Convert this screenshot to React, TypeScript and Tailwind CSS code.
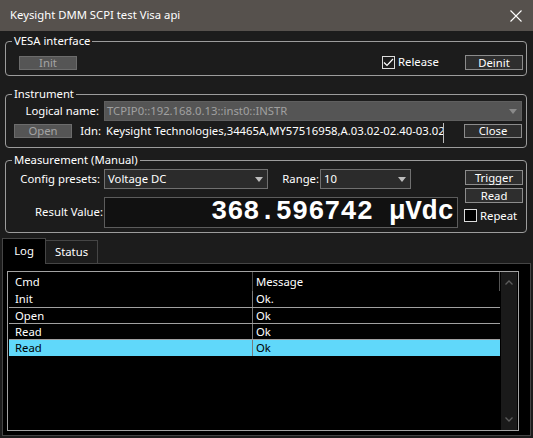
import type { ReactNode } from "react";

interface BtnProps {
  label: string;
  disabled?: boolean;
  className?: string;
}

function Btn({ label, disabled, className = "" }: BtnProps) {
  return (
    <button
      disabled={disabled}
      className={`w-[58px] flex items-center justify-center border leading-none shrink-0 ${
        disabled
          ? "bg-[#555555] border-[#6c6c6c] text-[#a3a3a3]"
          : "bg-[#2e2e2e] border-[#8c8c8c] text-white"
      } ${className}`}
    >
      {label}
    </button>
  );
}

function Arrow({ color = "#8a8a8a" }: { color?: string }) {
  return (
    <svg width="8" height="5" viewBox="0 0 8 5" className="shrink-0">
      <path d="M0 0 H8 L4 5 Z" fill={color} />
    </svg>
  );
}

function Group({ title, className = "", children }: { title: string; className?: string; children: ReactNode }) {
  return (
    <fieldset className={`mx-[5px] w-[522px] border border-[#9c9c9c] rounded-[4px] ${className}`}>
      <legend className="ml-[6px] px-[2px] leading-[14px]">{title}</legend>
      {children}
    </fieldset>
  );
}

const LOG_ROWS = [
  { cmd: "Init", msg: "Ok." },
  { cmd: "Open", msg: "Ok" },
  { cmd: "Read", msg: "Ok" },
];

export default function App() {
  return (
    <div className="w-[533px] h-[438px] bg-[#1c1c1c] text-white text-[11.3px] font-['Noto_Sans',sans-serif] flex flex-col overflow-hidden">
      {/* title bar */}
      <div className="h-[31px] bg-[#56514d] flex items-center justify-between pl-[10px] pr-[11px] shrink-0">
        <span>Keysight DMM SCPI test Visa api</span>
        <svg width="12" height="12" viewBox="0 0 12 12">
          <path d="M0.5 0.5 L11.5 11.5 M11.5 0.5 L0.5 11.5" stroke="#ffffff" strokeWidth="1.1" />
        </svg>
      </div>

      <Group title="VESA interface" className="mt-[3px]">
        <div className="flex items-center h-[15px] mt-[7px] mb-[5px]">
          <Btn label="Init" disabled className="ml-[13px] h-[14px]" />
          <div className="flex-1" />
          <div className="w-[83px] flex items-center">
            <span className="w-[13px] h-[13px] border border-[#dcdcdc] flex items-center justify-center">
              <svg width="11" height="9" viewBox="0 0 11 9">
                <path d="M1 4.5 L4 7.5 L10 1" stroke="#ffffff" strokeWidth="1.2" fill="none" />
              </svg>
            </span>
            <span className="ml-[3px]">Release</span>
          </div>
          <Btn label="Deinit" className="h-[15px] mr-[3px]" />
        </div>
      </Group>

      <Group title="Instrument" className="mt-[11px]">
        <div className="flex items-center h-[20px]">
          <span className="w-[98px] text-right pr-[5px]">Logical name:</span>
          <div className="w-[418px] h-[20px] bg-[#555555] border border-[#5f5f5f] text-[#a0a0a0] flex items-center justify-between pl-[2px] pr-[4px]">
            <span>TCPIP0::192.168.0.13::inst0::INSTR</span>
            <Arrow />
          </div>
        </div>
        <div className="flex items-start h-[20px] mt-[2px] mb-[4px]">
          <Btn label="Open" disabled className="ml-[8px] mt-[1px] h-[14px]" />
          <span className="w-[32px] text-right pr-[3px] leading-[16px]">Idn:</span>
          <div className="w-[340px] h-[20px] border-r border-[#bdbdbd] overflow-hidden whitespace-nowrap pl-[2px] leading-[16px]">
            Keysight Technologies,34465A,MY57516958,A.03.02-02.40-03.02-03.02
          </div>
          <Btn label="Close" className="ml-[20px] mt-[1px] h-[14px]" />
        </div>
      </Group>

      <Group title="Measurement (Manual)" className="mt-[5px]">
        <div className="flex pt-[2px] pb-[4px]">
          <div className="flex flex-col">
            <div className="flex items-center h-[20px]">
              <span className="w-[98px] text-right pr-[4px]">Config presets:</span>
              <div className="w-[164px] h-[20px] bg-[#2b2b2b] border border-[#707070] flex items-center justify-between pl-[3px] pr-[4px]">
                <span>Voltage DC</span>
                <Arrow color="#bdbdbd" />
              </div>
              <span className="w-[52px] text-right pr-[1px]">Range:</span>
              <div className="w-[91px] h-[20px] bg-[#2b2b2b] border border-[#707070] flex items-center justify-between pl-[3px] pr-[4px]">
                <span>10</span>
                <Arrow color="#bdbdbd" />
              </div>
            </div>
            <div className="flex items-center h-[31px] mt-[8px]">
              <span className="w-[98px] text-right pr-[1px]">Result Value:</span>
              <div className="w-[354px] h-[31px] bg-[#111111] border border-[#5c5c5c] flex items-center justify-end pr-[3px]">
                <span className="font-['Liberation_Mono',monospace] font-bold text-[27px] leading-[29px] whitespace-nowrap">
                  368.596742 µVdc
                </span>
              </div>
            </div>
          </div>
          <div className="ml-auto mr-[3px] w-[59px] flex flex-col items-end">
            <Btn label="Trigger" className="mt-[1px] h-[15px]" />
            <Btn label="Read" className="mt-[3px] h-[15px]" />
            <div className="mt-[6px] w-[59px] flex items-center">
              <span className="w-[13px] h-[13px] border border-[#dcdcdc] bg-black" />
              <span className="ml-[3px] leading-[13px]">Repeat</span>
            </div>
          </div>
        </div>
      </Group>

      {/* tabs */}
      <div className="flex items-end h-[25px] mt-[5px] pl-[2px] shrink-0">
        <div className="w-[44px] h-[26px] -mb-px relative z-10 bg-black border border-b-0 border-[#454545] flex items-center justify-center">
          Log
        </div>
        <div className="w-[52px] h-[23px] bg-[#1c1c1c] border border-l-0 border-b-0 border-[#454545] flex items-center justify-center">
          Status
        </div>
      </div>
      <div className="ml-[2px] w-[529px] h-[173px] bg-black border border-[#454545] shrink-0">
        <div className="ml-[4px] mt-[7px] w-[512px] h-[160px] border border-[#a3a3a3] flex pl-[1px]">
          <div className="w-[491px] flex flex-col">
            <div className="h-[19px] flex border-r border-[#555555]">
              <span className="w-[244px] pl-[6px] leading-[19px] border-r border-[#4a4a4a]">Cmd</span>
              <span className="pl-[3px] leading-[19px]">Message</span>
            </div>
            {LOG_ROWS.map((r, i) => (
              <div
                key={i}
                className={`flex border-b border-[#a0a0a0] ${i === 0 ? "h-[17px]" : "h-[16px]"}`}
              >
                <span className="w-[244px] pl-[6px] leading-[15px] border-r border-[#7a7a7a]">{r.cmd}</span>
                <span className="pl-[3px] leading-[15px]">{r.msg}</span>
              </div>
            ))}
            <div className="flex h-[16px] bg-[#60d8fa] text-black">
              <span className="w-[244px] pl-[6px] leading-[16px] border-r border-[#7a7a7a]">Read</span>
              <span className="pl-[3px] leading-[16px]">Ok</span>
            </div>
          </div>
          <div className="ml-[1px] w-[16px] h-full bg-[#1a1a1a] flex flex-col items-center justify-between py-[8px]">
            <svg width="8" height="5" viewBox="0 0 8 5">
              <path d="M0.5 4.5 L4 1 L7.5 4.5" stroke="#5c5c5c" strokeWidth="1.3" fill="none" />
            </svg>
            <svg width="8" height="5" viewBox="0 0 8 5">
              <path d="M0.5 0.5 L4 4 L7.5 0.5" stroke="#5c5c5c" strokeWidth="1.3" fill="none" />
            </svg>
          </div>
        </div>
      </div>
    </div>
  );
}
